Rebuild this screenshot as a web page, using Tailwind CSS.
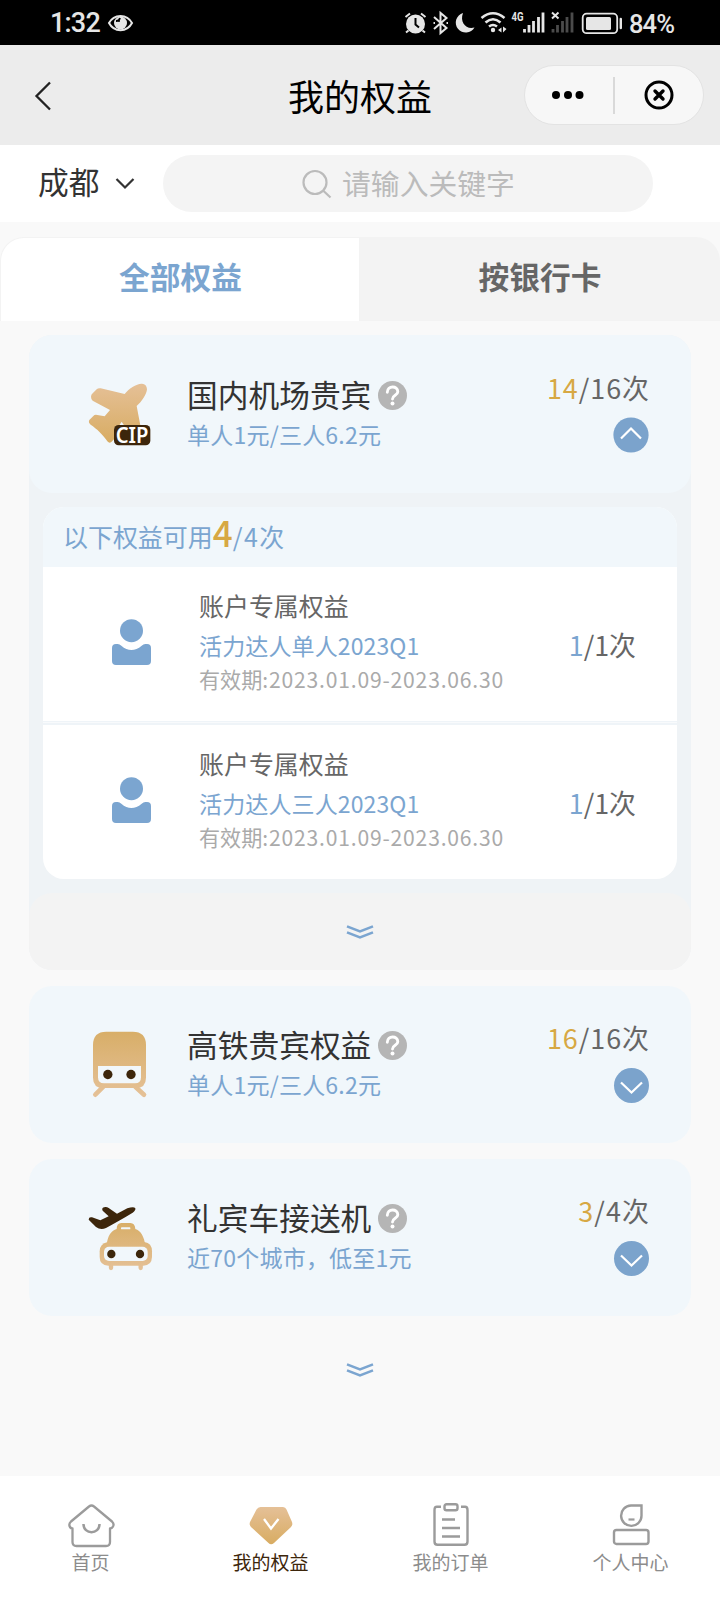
<!DOCTYPE html>
<html lang="zh-CN">
<head>
<meta charset="utf-8">
<meta name="viewport" content="width=device-width, initial-scale=1">
<title>我的权益</title>
<script src="https://cdn.jsdelivr.net/npm/@tailwindcss/browser@4"></script>
</head>
<body class="w-[720px] h-[1600px] overflow-hidden bg-[#f9f9f9] flex flex-col font-['Noto_Sans_CJK_SC',sans-serif] text-[#333] whitespace-nowrap">

<!-- Status bar -->
<div class="h-[45px] shrink-0 bg-black flex items-center text-[#e6e6e6] font-[Roboto,sans-serif]">
  <span class="ml-[50px] mt-[2px] w-[57px] text-[27px] font-medium leading-[43px] tracking-[-0.8px]">1:32</span>
  <svg class="w-[27px] h-[20px]" viewBox="0 0 27 20" fill="none">
    <path d="M2 10C7 0.500 20 0.500 25 10C20 19.500 7 19.500 2 10Z" stroke="#e6e6e6" stroke-width="2"/>
    <circle cx="13.500" cy="10" r="6.500" fill="#e6e6e6"/><path d="M9 8a4 4 0 0 0 4 -3" stroke="#000" stroke-width="1.800"/><circle cx="12" cy="8" r="1" fill="#000"/>
  </svg>
  <svg class="ml-[264px] w-[230px] h-[45px]" viewBox="398 0 230 45" fill="none" stroke="#e6e6e6">
    <circle cx="415.500" cy="24" r="9.500" fill="#e6e6e6" stroke="none"/>
    <path d="M405.500 17l4.500-3.500M425.500 17l-4.500-3.500M408.500 30.500l-2.500 2M422.500 30.500l2.500 2" stroke-width="2"/>
    <path d="M415.500 18v6.500l3.500 3" stroke="#000" stroke-width="2"/>
    <path d="M434 17l12.500 11-6 5V13l6 5L434 29" stroke-width="2"/>
    <path d="M433.500 23h1.500M446.500 23h1.500" stroke-width="2"/>
    <path d="M463 13A10 10 0 1 0 474.500 27.500C466 30 459.500 22 463 13Z" fill="#e6e6e6" stroke="none"/>
    <path d="M481.500 18Q493 8.500 504.500 18M485.500 22.500Q493 16 500.500 22.500M489 26.500Q493 23.500 497 26.500" stroke-width="2.600"/>
    <circle cx="493" cy="30" r="2.200" fill="#e6e6e6" stroke="none"/>
    <path d="M501.500 27.500v5l-3.500-2.500zM503 26.500v6l3.500-3.500z" fill="#e6e6e6" stroke="none"/>
    <text x="511.500" y="21" font-family="Roboto" font-size="12" font-weight="700" textLength="12" lengthAdjust="spacingAndGlyphs" fill="#e6e6e6" stroke="none">4G</text>
    <path d="M524.500 29v3.500M529 25v7.500M533.500 21v11.500M538.500 17v15.500M543 12.500v20" stroke-width="2.800"/>
    <path d="M553 29v3.500M557.500 25v7.500M562.500 21v11.500M567 17v15.500M572 12.500v20" stroke="#4b4b4b" stroke-width="2.800"/>
    <path d="M552 12.500l6.500 6M558.500 12.500l-6.500 6" stroke-width="2"/>
    <rect x="582.700" y="13.700" width="34.500" height="19.500" rx="4" stroke-width="1.800"/>
    <rect x="586" y="17" width="25" height="13" rx="1.500" fill="#e6e6e6" stroke="none"/>
    <path d="M620.800 19v9" stroke-width="2.400" stroke-linecap="round"/>
  </svg>
  <span class="ml-[1px] mt-[4px] text-[25.5px] font-medium leading-[41px] tracking-[-0.9px]">84%</span>
</div>

<!-- Title bar -->
<header class="h-[100px] shrink-0 bg-[#ececec] flex items-center">
  <svg class="ml-[34px] mt-px w-[18px] h-[30px]" viewBox="0 0 18 30" fill="none" stroke="#222" stroke-width="2.300"><path d="M16 1.500L2.500 15L16 28.500"/></svg>
  <h1 class="ml-[236px] text-[36px] leading-[100px] -mt-[1px] text-black">我的权益</h1>
  <div class="ml-auto mr-[16px] w-[180px] h-[60px] rounded-full bg-[#f7f7f7] border border-[#e3e3e3] flex items-center">
    <svg class="ml-[26px] w-[34px] h-[10px]" viewBox="0 0 34 10"><circle cx="5" cy="5" r="4"/><circle cx="17" cy="5" r="4"/><circle cx="28.500" cy="5" r="4"/></svg>
    <div class="ml-[28px] w-[2px] h-[37px] bg-[#d9d9d9]"></div>
    <svg class="ml-[29px] w-[30px] h-[30px]" viewBox="0 0 30 30" fill="none" stroke="#000"><circle cx="15" cy="15" r="13" stroke-width="3"/><path d="M11 11l8 8M19 11l-8 8" stroke-width="3.400" stroke-linecap="round"/></svg>
  </div>
</header>

<!-- Location and search -->
<section class="h-[77px] shrink-0 bg-white flex items-start pt-[10px]">
  <span class="ml-[38px] text-[30.72px] leading-[52px]">成都</span>
  <svg class="ml-[15.600px] mt-[22px] w-[20px] h-[13px]" viewBox="0 0 20 13" fill="none" stroke="#333" stroke-width="2.200"><path d="M1.500 2L10 10.500L18.500 2"/></svg>
  <div class="ml-[28px] w-[490px] h-[57px] rounded-full bg-[#f4f4f4] flex items-center text-[#bbb]">
    <svg class="ml-[139px] w-[30px] h-[30px]" viewBox="0 0 30 30" fill="none" stroke="#bbb" stroke-width="2.200"><circle cx="13" cy="13.500" r="11.500"/><path d="M21 21.500l7.500 7"/></svg>
    <span class="ml-[10px] -mt-[2px] text-[28.8px] leading-[54px]">请输入关键字</span>
  </div>
</section>

<!-- Tabs -->
<nav class="mt-[15px] h-[84px] shrink-0 rounded-t-[24px] bg-[#f3f3f3] flex pl-px pt-px text-[30.72px] font-bold text-center">
  <div class="w-[358px] rounded-tl-[23px] bg-white text-[#7ba5d0] leading-[76px] pl-px">全部权益</div>
  <div class="flex-1 text-[#666] leading-[76px] pl-px">按银行卡</div>
</nav>

<main class="mt-[14px] ml-[29px] w-[662px] h-[1141px] shrink-0 flex flex-col">

  <!-- Domestic airport lounge, expanded -->
  <section class="h-[635px] shrink-0 rounded-[23px] bg-[#eff3f6]">
    <div class="h-[158px] rounded-[23px] bg-[#f1f7fb] flex">
      <svg class="ml-[57px] mt-[45px] w-[68px] h-[68px]" viewBox="48 60 204 204">
        <defs><linearGradient id="gp" x1="0" y1="0" x2="0" y2="1"><stop offset="0" stop-color="#e5c097"/><stop offset="1" stop-color="#d8ac62"/></linearGradient></defs>
        <path fill="url(#gp)" d="M63 110Q63 104 68 100L80 88Q84 84 92 85L164 102C176 86 200 70 216 71Q230 72 231 88C230 104 214 126 200 138L211 196H162L155 185L148 196Q132 198 132 210V238L124 246Q118 251 112 244C100 225 80 206 62 194Q54 188 58 180L70 168Q74 163 82 165L104 169L120 150L68 122Q63 118 63 110Z"/>
        <rect x="132" y="195" width="109" height="61" rx="14" fill="#3d260b"/>
        <text x="137" y="248" font-family="Noto Sans" font-size="63" font-weight="600" fill="#fff" textLength="98" lengthAdjust="spacingAndGlyphs">CIP</text>
      </svg>
      <div class="ml-[33px] mt-[36px]">
        <div class="flex items-center h-[46px]">
          <span class="text-[30.72px] leading-[44px] -mt-[1px]">国内机场贵宾</span>
          <svg class="ml-[7px] mt-[3px] w-[29px] h-[29px]" viewBox="0 0 29 29" fill="none"><circle cx="14.500" cy="14.500" r="14.500" fill="#b5b5b5"/><path d="M9.300 11.300C9.300 4.300 19.800 4.300 19.800 10.700C19.800 14.500 14.500 14 14.500 18" stroke="#fff" stroke-width="2.900" stroke-linecap="round"/><circle cx="14.500" cy="22.500" r="2" fill="#fff"/></svg>
        </div>
        <p class="text-[23.04px] leading-[34px] tracking-[0.2px] text-[#7ba5d0]">单人1元/三人6.2元</p>
      </div>
      <div class="ml-auto mr-[42px] mt-[33px] flex flex-col items-end">
        <p class="text-[26.88px] leading-[40px] text-[#666]"><span class="tracking-[1px]"><span class="text-[#d7a843]">14</span>/16</span>次</p>
        <svg class="mt-[9px] w-[36px] h-[36px]" viewBox="0 0 36 36" fill="none"><circle cx="18" cy="18" r="17.600" fill="#7ba3cc"/><path d="M8 21.500L18 11.500L28 21.500" stroke="#fff" stroke-width="2.200"/></svg>
      </div>
    </div>

    <div class="mt-[14px] mx-[14px] h-[372px] rounded-[21px] bg-white">
      <p class="h-[60px] pl-[20px] rounded-t-[21px] bg-[#f1f7fb] text-[24.96px] leading-[58px] text-[#7ba5d0]">以下权益可用<span class="text-[35px] leading-[50px] font-medium text-[#d7a843]">4</span><span class="tracking-[1.500px]">/4</span>次</p>
      <div class="h-[154px] flex">
        <svg class="ml-[69px] mt-[52px] w-[39px] h-[46px]" viewBox="0 0 117 138" fill="#7ba5d0"><circle cx="58.500" cy="35" r="34.500"/><path d="M12 75H17Q23 75 28 80Q58 106 89 80Q94 75 100 75H105Q117 75 117 87V126Q117 138 105 138H12Q0 138 0 126V87Q0 75 12 75Z"/></svg>
        <div class="ml-[48px] mt-[19px]">
          <p class="text-[24.96px] leading-[38px] text-[#666]">账户专属权益</p>
          <p class="mt-[2px] text-[23.04px] leading-[38px] tracking-[0.1px] text-[#7ba5d0]">活力达人单人2023Q1</p>
          <p class="text-[21.12px] leading-[31px] text-[#aaa]">有效期<span class="tracking-[0.8px]">:2023.01.09-2023.06.30</span></p>
        </div>
        <p class="ml-auto mr-[41px] mt-[58px] text-[26.88px] leading-[40px] text-[#666]"><span class="text-[#7ba5d0]">1</span>/1次</p>
      </div>
      <div class="h-[4px] border-t border-b-2 border-[#eff4f8] bg-[#f8fafc]"></div>
      <div class="h-[154px] flex">
        <svg class="ml-[69px] mt-[52px] w-[39px] h-[46px]" viewBox="0 0 117 138" fill="#7ba5d0"><circle cx="58.500" cy="35" r="34.500"/><path d="M12 75H17Q23 75 28 80Q58 106 89 80Q94 75 100 75H105Q117 75 117 87V126Q117 138 105 138H12Q0 138 0 126V87Q0 75 12 75Z"/></svg>
        <div class="ml-[48px] mt-[19px]">
          <p class="text-[24.96px] leading-[38px] text-[#666]">账户专属权益</p>
          <p class="mt-[2px] text-[23.04px] leading-[38px] tracking-[0.1px] text-[#7ba5d0]">活力达人三人2023Q1</p>
          <p class="text-[21.12px] leading-[31px] text-[#aaa]">有效期<span class="tracking-[0.8px]">:2023.01.09-2023.06.30</span></p>
        </div>
        <p class="ml-auto mr-[41px] mt-[58px] text-[26.88px] leading-[40px] text-[#666]"><span class="text-[#7ba5d0]">1</span>/1次</p>
      </div>
    </div>

    <div class="mt-[14px] h-[77px] rounded-[23px] bg-[#f3f3f3] flex items-center justify-center">
      <svg class="w-[28px] h-[14px]" viewBox="0 0 28 14" fill="none" stroke="#7ba5d0" stroke-width="2.500"><path d="M1 1.300L14 6.500L27 1.300M1 7.300L14 12.500L27 7.300"/></svg>
    </div>
  </section>

  <!-- High-speed rail lounge -->
  <section class="mt-[16px] h-[157px] shrink-0 rounded-[23px] bg-[#f1f7fb] flex">
    <svg class="ml-[57px] mt-[45px] w-[68px] h-[68px]" viewBox="258 183 204 204" fill="none">
      <defs><linearGradient id="gt" gradientUnits="userSpaceOnUse" x1="0" y1="185" x2="0" y2="380"><stop offset="0" stop-color="#d8ae68"/><stop offset="1" stop-color="#e5c197"/></linearGradient></defs>
      <path d="M310 350L286 374M406 350L432 374" stroke="url(#gt)" stroke-width="14" stroke-linecap="round"/>
      <path d="M319 185H398Q438 185 438 225V323Q438 354 407 354H310Q279 354 279 323V225Q279 185 319 185Z" fill="url(#gt)"/>
      <path d="M294 288H423V322Q423 340 405 340H312Q294 340 294 322Z" fill="#f1f7fb"/>
      <circle cx="323.500" cy="313.500" r="14" fill="#3d260b"/><circle cx="393" cy="313.500" r="14" fill="#3d260b"/>
    </svg>
    <div class="ml-[33px] mt-[35px]">
      <div class="flex items-center h-[46px]">
        <span class="text-[30.72px] leading-[44px] -mt-[1px]">高铁贵宾权益</span>
        <svg class="ml-[7px] mt-[3px] w-[29px] h-[29px]" viewBox="0 0 29 29" fill="none"><circle cx="14.500" cy="14.500" r="14.500" fill="#b5b5b5"/><path d="M9.300 11.300C9.300 4.300 19.800 4.300 19.800 10.700C19.800 14.500 14.500 14 14.500 18" stroke="#fff" stroke-width="2.900" stroke-linecap="round"/><circle cx="14.500" cy="22.500" r="2" fill="#fff"/></svg>
      </div>
      <p class="text-[23.04px] leading-[34px] tracking-[0.2px] text-[#7ba5d0]">单人1元/三人6.2元</p>
    </div>
    <div class="ml-auto mr-[42px] mt-[32px] flex flex-col items-end">
      <p class="text-[26.88px] leading-[40px] text-[#666]"><span class="tracking-[1px]"><span class="text-[#d7a843]">16</span>/16</span>次</p>
      <svg class="mt-[10px] w-[36px] h-[36px]" viewBox="0 0 36 36" fill="none"><circle cx="18.500" cy="17.500" r="17.500" fill="#7ba3cc"/><path d="M8 14.500L18.500 24.500L29 14.500" stroke="#fff" stroke-width="2.200"/></svg>
    </div>
  </section>

  <!-- Airport transfer -->
  <section class="mt-[16px] h-[157px] shrink-0 rounded-[23px] bg-[#f1f7fb] flex">
    <svg class="ml-[57px] mt-[45px] w-[68px] h-[68px]" viewBox="258 701 204 204" fill="none">
      <defs><linearGradient id="gc" gradientUnits="userSpaceOnUse" x1="0" y1="758" x2="0" y2="900"><stop offset="0" stop-color="#d8ae68"/><stop offset="1" stop-color="#e5c197"/></linearGradient></defs>
      <path d="M266 748Q266 739 276 741L301 750L326 738L308 721Q304 714 312 711Q320 709 326 713L351 730L382 714Q402 707 406 714Q408 720 398 727C370 745 340 760 318 773Q302 781 288 770Z" fill="#3d260b"/>
      <path d="M320 826C322 795 335 780 350 776Q350 758 364 758H391Q405 758 406 776C422 780 433 800 436 826Z" fill="url(#gc)"/>
      <rect x="363" y="771" width="28" height="6" rx="2" fill="#f1f7fb"/>
      <path d="M333 880V893M422 880V893" stroke="url(#gc)" stroke-width="13" stroke-linecap="round"/>
      <path d="M323 815H433Q456 818 456 843V860Q455 886 430 886H325Q299 885 299 860V843Q299 820 323 815Z" fill="url(#gc)"/>
      <rect x="312" y="829" width="131" height="43" rx="15" fill="#f1f7fb"/>
      <ellipse cx="334" cy="851" rx="12.500" ry="13" fill="#3d260b"/><ellipse cx="420" cy="851" rx="12.500" ry="13" fill="#3d260b"/>
    </svg>
    <div class="ml-[33px] mt-[35px]">
      <div class="flex items-center h-[46px]">
        <span class="text-[30.72px] leading-[44px] -mt-[1px]">礼宾车接送机</span>
        <svg class="ml-[7px] mt-[3px] w-[29px] h-[29px]" viewBox="0 0 29 29" fill="none"><circle cx="14.500" cy="14.500" r="14.500" fill="#b5b5b5"/><path d="M9.300 11.300C9.300 4.300 19.800 4.300 19.800 10.700C19.800 14.500 14.500 14 14.500 18" stroke="#fff" stroke-width="2.900" stroke-linecap="round"/><circle cx="14.500" cy="22.500" r="2" fill="#fff"/></svg>
      </div>
      <p class="text-[23.04px] leading-[34px] tracking-[0.2px] text-[#7ba5d0]">近70个城市，低至1元</p>
    </div>
    <div class="ml-auto mr-[42px] mt-[32px] flex flex-col items-end">
      <p class="text-[26.88px] leading-[40px] text-[#666]"><span class="tracking-[1.200px]"><span class="text-[#d7a843]">3</span>/4</span>次</p>
      <svg class="mt-[10px] w-[36px] h-[36px]" viewBox="0 0 36 36" fill="none"><circle cx="18.500" cy="17.500" r="17.500" fill="#7ba3cc"/><path d="M8 14.500L18.500 24.500L29 14.500" stroke="#fff" stroke-width="2.200"/></svg>
    </div>
  </section>

  <svg class="mt-[47px] mx-auto w-[28px] h-[14px] shrink-0" viewBox="0 0 28 14" fill="none" stroke="#7ba5d0" stroke-width="2.500"><path d="M1 1.300L14 6.500L27 1.300M1 7.300L14 12.500L27 7.300"/></svg>
</main>

<!-- Bottom navigation -->
<footer class="h-[124px] shrink-0 bg-white grid grid-cols-4 text-[19px] leading-[28px] text-center text-[#8c8c8c]">
  <div class="pt-[26px] pl-px flex flex-col items-center">
    <svg class="w-[48px] h-[46px]" viewBox="0 0 48 46" fill="none" stroke="#9b9b9b" stroke-width="2.300"><path d="M22 4.500Q24.500 2.500 27 4.500L45 19.500Q47.500 22 46 24.500Q45 26.500 43 26.500V40Q43 44 39 44H9.500Q5.500 44 5.500 40V26.500Q3.500 26.500 2.500 24Q1.800 21.500 4 19.500Z" stroke-linejoin="round"/><path d="M16.500 22C16.500 33 32.500 33 32.500 22" stroke-width="2.500"/></svg>
    <span>首页</span>
  </div>
  <div class="pt-[26px] pl-px flex flex-col items-center text-[#3d260b]">
    <svg class="w-[44px] h-[46px]" viewBox="0 0 44 46" fill="none"><defs><linearGradient id="gd" x1="0" y1="0" x2="0" y2="1"><stop offset="0" stop-color="#e5c097"/><stop offset="1" stop-color="#d8ac62"/></linearGradient></defs><path d="M11.500 5H34Q36.500 5 37.500 7.500L43 20Q44 23 42 25L25 41Q22 43.500 19.500 41L2 25Q0 23 1 20L7.500 7.500Q9 5 11.500 5Z" fill="url(#gd)"/><path d="M15 17L22 26.500L29.500 17" stroke="#fff" stroke-width="2.300"/></svg>
    <span>我的权益</span>
  </div>
  <div class="pt-[26px] pl-px flex flex-col items-center">
    <svg class="w-[36px] h-[46px]" viewBox="0 0 36 46" fill="none" stroke="#9b9b9b" stroke-width="2.400"><path d="M8 4.800H4Q1.500 4.800 1.500 8V39.500Q1.500 42.800 4.500 42.800H31.500Q34.500 42.800 34.500 39.500V8Q34.500 4.800 32 4.800H28"/><rect x="11.500" y="2.300" width="13" height="6" rx="2"/><path d="M9 17.500H22M9 26H27M9 34.500H27"/></svg>
    <span>我的订单</span>
  </div>
  <div class="pt-[26px] pl-px flex flex-col items-center">
    <svg class="w-[38px] h-[46px]" viewBox="0 0 38 46" fill="none" stroke="#9b9b9b" stroke-width="2.400"><path d="M19 3.500H29.500V13.500A10.200 10.200 0 1 1 19 3.500Z"/><path d="M16.500 17.500H22.500" stroke-width="2.200"/><rect x="2" y="28" width="34.500" height="14" rx="2.500"/></svg>
    <span>个人中心</span>
  </div>
</footer>
</body>
</html>
